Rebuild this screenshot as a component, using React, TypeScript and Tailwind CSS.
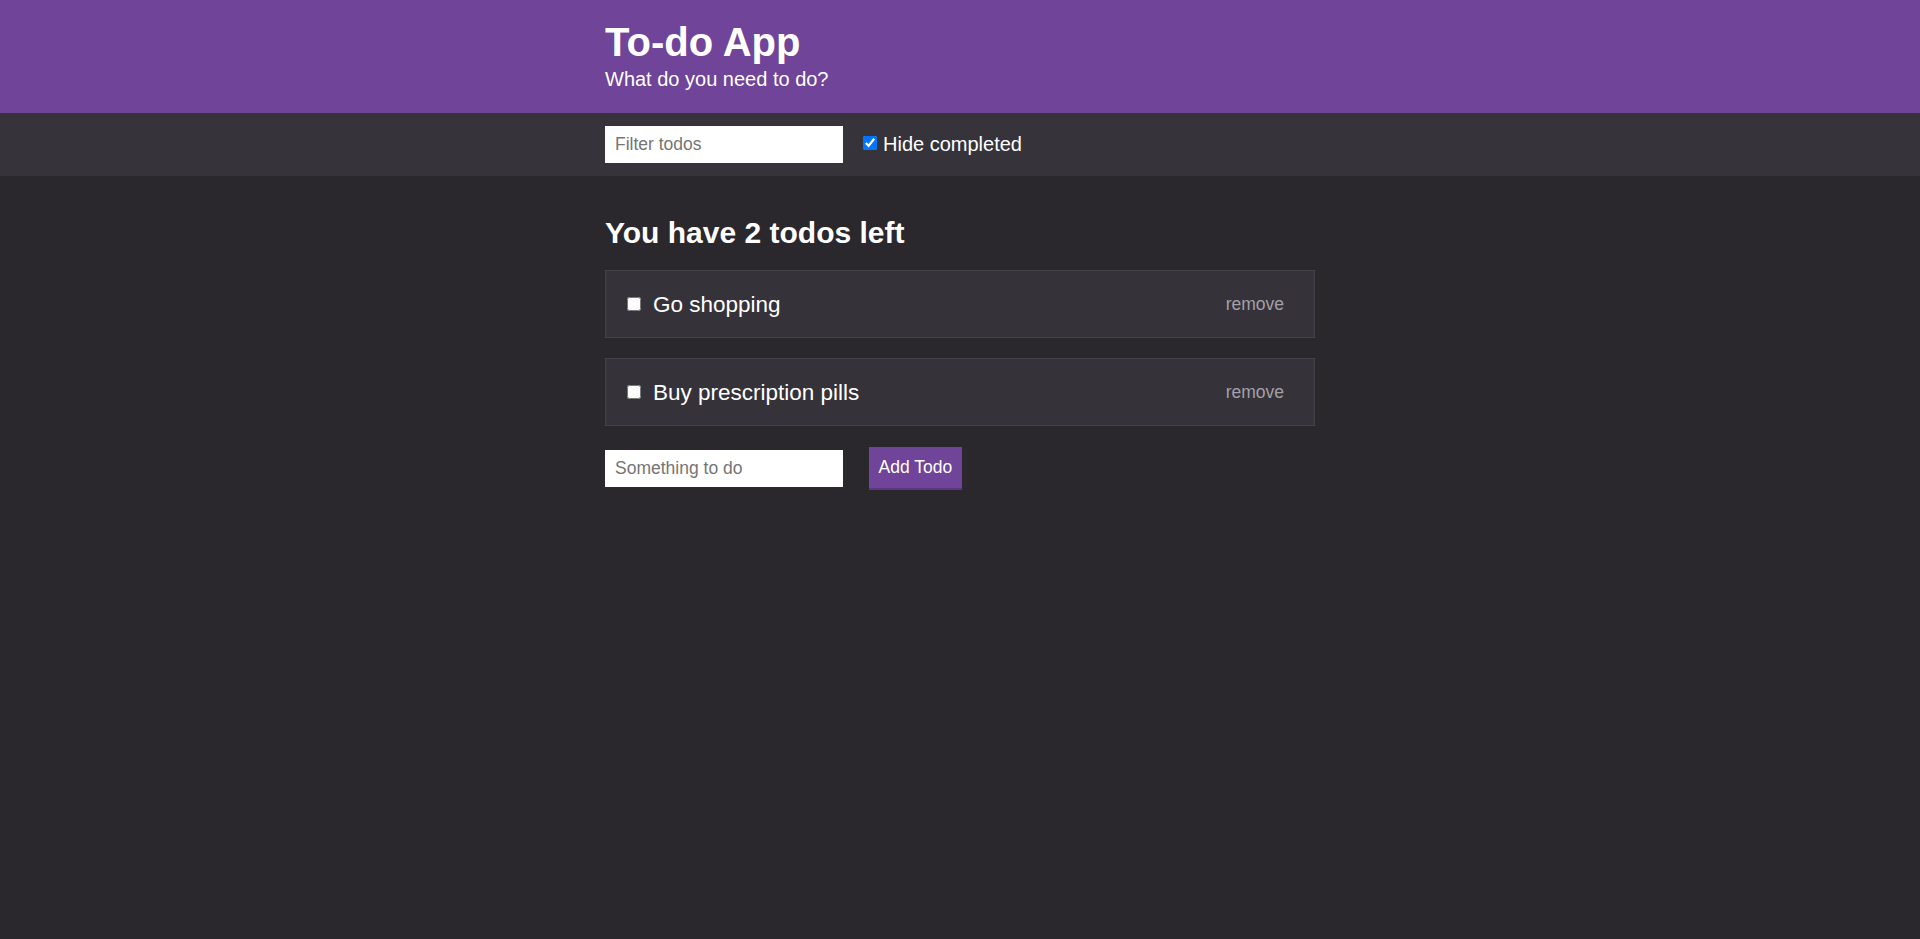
import React from "react";

const todos = ["Go shopping", "Buy prescription pills"];

export default function App() {
  return (
    <div className="min-h-screen bg-[#2a282d] font-['Liberation_Sans',Arial,sans-serif] text-white">
      <header className="bg-[#6f4499] pt-[20px] pb-[22px]">
        <div className="w-[710px] mx-auto">
          <h1 className="text-[40px] font-bold leading-[45px]">To-do App</h1>
          <p className="mt-[3px] text-[20px] leading-[23px]">What do you need to do?</p>
        </div>
      </header>
      <div className="bg-[#36333b] h-[63px] flex items-center">
        <div className="w-[710px] mx-auto flex items-center">
          <input
            placeholder="Filter todos"
            className="w-[238px] h-[37px] bg-white px-[10px] text-[17.5px] text-black placeholder:text-[#757575] outline-none"
          />
          <label className="ml-[20px] flex items-center gap-[6px] text-[20px] leading-[23px]">
            <input type="checkbox" defaultChecked className="m-0 mb-[3px] w-[14px] h-[14px]" />
            Hide completed
          </label>
        </div>
      </div>
      <main className="w-[710px] mx-auto pt-[40px]">
        <h2 className="text-[30px] font-bold leading-[34px]">You have 2 todos left</h2>
        <ul className="mt-[20px] flex flex-col gap-[20px]">
          {todos.map((t) => (
            <li
              key={t}
              className="h-[68px] border border-[#44414a] bg-[#35323a] flex items-center pl-[21px] pr-[30px]"
            >
              <input type="checkbox" className="m-0 mt-[-1px] w-[14px] h-[14px]" />
              <span className="ml-[12px] text-[22.5px] leading-[25px]">{t}</span>
              <button className="ml-auto text-[17.5px] text-[#a3a0a8]">remove</button>
            </li>
          ))}
        </ul>
        <div className="mt-[21px] flex items-center">
          <input
            placeholder="Something to do"
            className="w-[238px] h-[37px] bg-white px-[10px] text-[17.5px] text-black placeholder:text-[#757575] outline-none"
          />
          <button className="ml-[26px] h-[43px] px-[9.5px] bg-[#6f4499] border-b-[2px] border-[#5a3780] text-[17.5px] text-white">
            Add Todo
          </button>
        </div>
      </main>
    </div>
  );
}
